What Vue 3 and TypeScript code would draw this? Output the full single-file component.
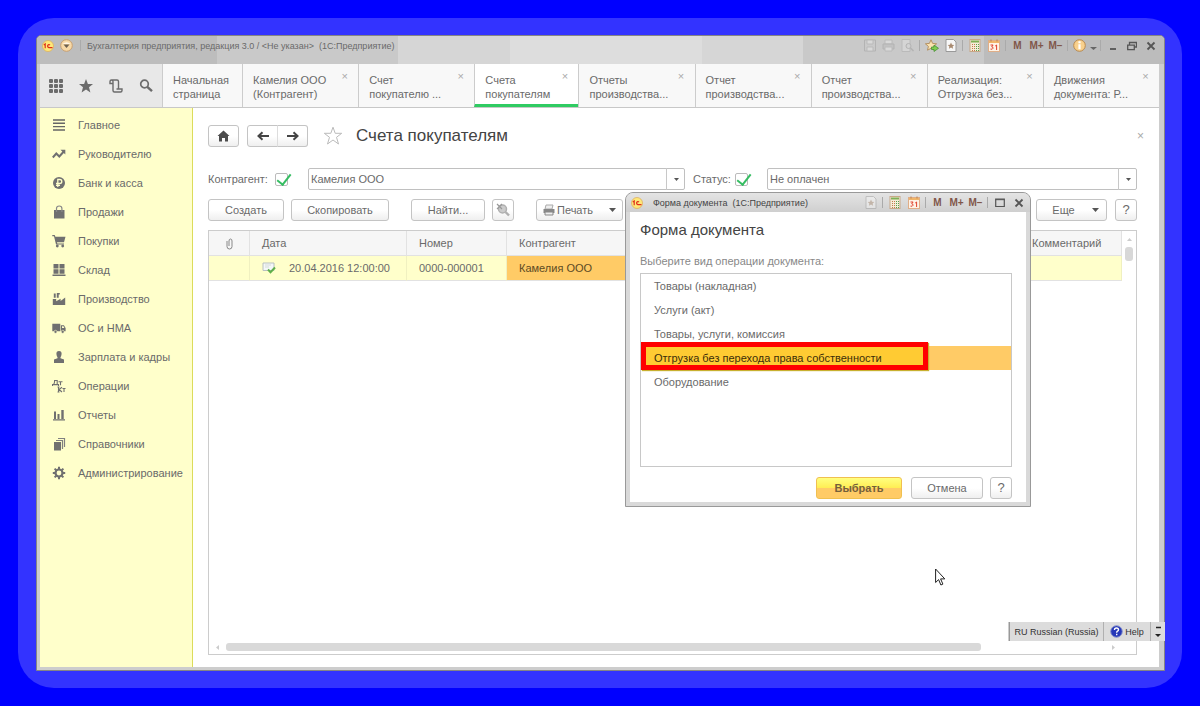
<script setup lang="ts">
import { ref } from 'vue'

interface Tab { lines: [string, string]; kind: 'home' | 'doc' | 'active' }
interface Section { label: string; icon: string }

const tabs: Tab[] = [
  { lines: ['Начальная', 'страница'], kind: 'home' },
  { lines: ['Камелия ООО', '(Контрагент)'], kind: 'doc' },
  { lines: ['Счет', 'покупателю ...'], kind: 'doc' },
  { lines: ['Счета', 'покупателям'], kind: 'active' },
  { lines: ['Отчеты', 'производства...'], kind: 'doc' },
  { lines: ['Отчет', 'производства...'], kind: 'doc' },
  { lines: ['Отчет', 'производства...'], kind: 'doc' },
  { lines: ['Реализация:', 'Отгрузка без...'], kind: 'doc' },
  { lines: ['Движения', 'документа: Р...'], kind: 'doc' },
]

const sections: Section[] = [
  { label: 'Главное', icon: 'menu' },
  { label: 'Руководителю', icon: 'trend' },
  { label: 'Банк и касса', icon: 'ruble' },
  { label: 'Продажи', icon: 'bag' },
  { label: 'Покупки', icon: 'cart' },
  { label: 'Склад', icon: 'store' },
  { label: 'Производство', icon: 'factory' },
  { label: 'ОС и НМА', icon: 'truck' },
  { label: 'Зарплата и кадры', icon: 'person' },
  { label: 'Операции', icon: 'dtkt' },
  { label: 'Отчеты', icon: 'chart' },
  { label: 'Справочники', icon: 'books' },
  { label: 'Администрирование', icon: 'gear' },
]

const operations = [
  'Товары (накладная)',
  'Услуги (акт)',
  'Товары, услуги, комиссия',
  'Отгрузка без перехода права собственности',
  'Оборудование',
]
const selected = ref(3)
const useCustomer = ref(true)
const useStatus = ref(true)
</script>

<template>
  <div class="desk">
    <svg class="defs" aria-hidden="true">
      <symbol id="logo" viewBox="0 0 12 12">
        <circle cx="6" cy="6" r="5.500" fill="#ffe878" stroke="#dcb060" stroke-width=".8" />
        <path d="M1.800 5l1.400-1v4.300M8 4.900a1.500 1.500 0 1 0-1 2.700H10.500" fill="none" stroke="#e0301c" stroke-width="1.200" />
      </symbol>
      <symbol id="calc" viewBox="0 0 12 13">
        <rect x="1" y=".5" width="10" height="12" fill="#f6ecd8" stroke="#c8a888" />
        <path d="M2 2.500h8" stroke="#7fae55" stroke-width="2" />
        <path d="M3.500 5v7M5.500 5v7" stroke="#c7794c" stroke-dasharray="1 1" />
        <path d="M7.500 5v7M9.500 5v7" stroke="#58a24c" stroke-dasharray="1 1" />
      </symbol>
      <symbol id="calendar" viewBox="0 0 12 13">
        <rect x=".5" y="1.500" width="11" height="11" fill="#fff3e6" stroke="#dfae88" />
        <path d="M1 3h10" stroke="#f0b56a" stroke-width="2" />
        <path d="M3 .5v2M9 .5v2" stroke="#b98050" />
        <path d="M2.500 6h2.600l-1.400 1.800q1.600 0 1.300 1.500-.5 1.400-2.500.8M7.200 7l1.400-1v5" fill="none" stroke="#e0402c" />
      </symbol>
      <symbol id="close" viewBox="0 0 10 10"><path d="M1.500 1.500l7 7M8.500 1.500l-7 7" stroke="#555" stroke-width="1.800" /></symbol>
      <symbol id="favdoc" viewBox="0 0 12 13">
        <path d="M1 .5h7.500l2.500 2.500v9.500h-10z" fill="#f7f7f7" stroke="#999" />
        <path d="M6 3.500l1 2.200 2.300.2-1.700 1.500.5 2.400L6 8.600 3.900 9.800l.5-2.400-1.700-1.500 2.300-.2z" fill="#a88a70" />
      </symbol>

      <symbol id="menu" viewBox="0 0 14 14"><path d="M1 2h12M1 5.300h12M1 8.600h12M1 12h12" stroke="#666" stroke-width="1.400" /></symbol>
      <symbol id="trend" viewBox="0 0 14 14"><path d="M.8 10.500l3.500-4 3 3 4.500-5" fill="none" stroke="#707070" stroke-width="2" /><path d="M8.500 2.800H13.300V7.600z" fill="#707070" /></symbol>
      <symbol id="ruble" viewBox="0 0 14 14"><circle cx="7" cy="7" r="6" fill="#707070" /><path d="M5.800 11V3.500h2q2 0 2 2t-2 2H4M4 9.300h4" fill="none" stroke="#ffffcb" stroke-width="1.300" /></symbol>
      <symbol id="bag" viewBox="0 0 14 14"><path d="M2 5h10.500v8.500h-10.500z" fill="#707070" /><path d="M4.500 7V3.500q0-2.500 2.700-2.500t2.700 2.500V7" fill="none" stroke="#888" stroke-width="1.200" /></symbol>
      <symbol id="cart" viewBox="0 0 14 14"><path d="M.3 1h2.400l.7 1.700H13.500L12 8.200H5l.3 1.200H12v1.200H4L2 2.200H.3z" fill="#707070" /><circle cx="5.300" cy="12" r="1.400" fill="#707070" /><circle cx="10.700" cy="12" r="1.400" fill="#707070" /></symbol>
      <symbol id="store" viewBox="0 0 14 14"><path d="M1.500 1h5v4.500h-5zM7.500 1h5v4.500h-5zM1.500 6.300h5v4.500h-5zM7.500 6.300h5v4.500h-5zM.5 11.500h13v1.500H.5z" fill="#707070" /></symbol>
      <symbol id="factory" viewBox="0 0 14 14"><path d="M.8 13V7h3.400v2.300L8.600 6.800v2.200L13.200 5.600V13zM1.800 1.500h1.900v4.300H1.800zM4.800 1h3v1.400H6.700v3.400H4.800z" fill="#707070" /></symbol>
      <symbol id="truck" viewBox="0 0 14 14"><path d="M.3 2.800h8v7.500h-8zM8.900 4.300h3l1.700 2.700v3.300H8.900z" fill="#707070" /><path d="M10 5.300h1.500l.9 1.700H10z" fill="#ffffcb" /><circle cx="3.500" cy="10.800" r="1.500" fill="#707070" stroke="#ffffcb" stroke-width=".6" /><circle cx="10.700" cy="10.800" r="1.500" fill="#707070" stroke="#ffffcb" stroke-width=".6" /></symbol>
      <symbol id="person" viewBox="0 0 14 14"><path d="M7 1q2.800 0 2.600 3Q9.300 6.500 8.500 7.200v1L12 9.500V13H2V9.500l3.500-1.300v-1Q4.700 6.500 4.400 4 4.200 1 7 1z" fill="#707070" /></symbol>
      <symbol id="dtkt" viewBox="0 0 14 14"><path d="M.5 7V5.600h6V7M1.500 5.600Q2.700 4 2.600 1.500h2.600v4M6.500 2.700h4M8.500 2.700v3.500M5.500 8h2M6.500 8v5M5.500 13h2M10 8.300L7 10.500l3 2.500M10.500 9.500h3M12 9.500V13" fill="none" stroke="#707070" stroke-width="1.100" /></symbol>
      <symbol id="chart" viewBox="0 0 14 14"><path d="M2 3.500h2V11H2zM5.500 6h2v5h-2zM9.300 2h2.400v9H9.300zM1 11.200h12v1.300H1z" fill="#707070" /></symbol>
      <symbol id="books" viewBox="0 0 14 14"><path d="M2 5h7v8.500H2z" fill="#707070" /><path d="M4 3.500h6.500V12M6 1.500h6.500V10" fill="none" stroke="#808080" stroke-width="1.200" /></symbol>
      <symbol id="gear" viewBox="0 0 14 14"><circle cx="7" cy="7" r="3.500" fill="none" stroke="#707070" stroke-width="2.200" /><path d="M7 .8v2.400M7 10.800v2.400M.8 7h2.400M10.800 7h2.400M2.600 2.600l1.700 1.700M9.700 9.700l1.700 1.700M11.400 2.600L9.700 4.300M4.300 9.700l-1.700 1.700" stroke="#707070" stroke-width="2" /></symbol>
    </svg>

    <div class="halo">
      <div class="window">
        <header class="titlebar">
          <svg class="logo"><use href="#logo" /></svg>
          <button class="chip orb" aria-label="Главное меню">
            <svg width="13" height="13" viewBox="0 0 13 13"><circle cx="6.500" cy="6.500" r="5.800" fill="#f8d9a6" stroke="#c9a070" /><path d="M2.500 5q4-3.500 8 0z" fill="#fff6e6" /><path d="M3.500 5.500h6L6.500 9z" fill="#6d6050" /></svg>
          </button>
          <i class="sep"></i>
          <span class="caption">Бухгалтерия предприятия, редакция 3.0 / &lt;Не указан&gt;&nbsp; (1С:Предприятие)</span>
          <div class="tools">
            <button class="chip faded" aria-label="Сохранить"><svg width="12" height="13" viewBox="0 0 12 13"><path d="M.5 1h11v11H.5z" fill="#ccc" stroke="#999" /><path d="M3 1h6v4H3zM3 8h6v4H3z" fill="#eee" stroke="#aaa" /></svg></button>
            <button class="chip faded" aria-label="Печать"><svg width="13" height="13" viewBox="0 0 13 13"><path d="M3 1h7v4H3z" fill="#eee" stroke="#aaa" /><path d="M1 5h11v5H1z" fill="#bbb" stroke="#999" /><path d="M3 8h7v4H3z" fill="#eee" stroke="#aaa" /></svg></button>
            <button class="chip faded" aria-label="Просмотр"><svg width="13" height="13" viewBox="0 0 13 13"><path d="M1 .5h8v12H1z" fill="#e4e4e4" stroke="#aaa" /><circle cx="7.500" cy="7" r="2.500" fill="#ddd" stroke="#999" /><path d="M9.500 9l3 3" stroke="#999" stroke-width="1.500" /></svg></button>
            <i class="sep"></i>
            <button class="chip" aria-label="В избранное"><svg width="14" height="13" viewBox="0 0 14 13"><path d="M6 .8l1.600 3.600 4 .4-3 2.600.9 3.800L6 9.300l-3.500 1.900.9-3.800-3-2.600 4-.4z" fill="#fbe3b0" stroke="#b08a58" stroke-width=".9" /><path d="M6.500 8H9V6l4.500 3.300L9 12.500v-2H6.500z" fill="#7fce50" stroke="#4a9238" stroke-width=".8" /></svg></button>
            <button class="chip" aria-label="Избранное"><svg width="12" height="13"><use href="#favdoc" /></svg></button>
            <i class="sep"></i>
            <button class="chip" aria-label="Калькулятор"><svg width="12" height="13"><use href="#calc" /></svg></button>
            <button class="chip" aria-label="Календарь"><svg width="12" height="13"><use href="#calendar" /></svg></button>
            <i class="sep"></i>
            <button class="chip mem">M</button>
            <button class="chip mem">M+</button>
            <button class="chip mem">M−</button>
            <i class="sep"></i>
            <button class="chip" aria-label="Справка"><svg width="13" height="13" viewBox="0 0 13 13"><circle cx="6.500" cy="6.500" r="5.800" fill="#f8d08c" stroke="#b98a50" /><path d="M6.500 2.200v2M6.500 5.200v5" stroke="#fff" stroke-width="2.200" /></svg></button>
            <button class="chip slim" aria-label="Ещё"><svg width="7" height="13" viewBox="0 0 7 13"><path d="M0 8h7L3.500 11z" fill="#666" /></svg></button>
            <i class="sep"></i>
            <button class="chip" aria-label="Свернуть"><svg width="10" height="10" viewBox="0 0 10 10"><path d="M2 8h6" stroke="#555" stroke-width="1.800" /></svg></button>
            <button class="chip" aria-label="Восстановить"><svg width="10" height="10" viewBox="0 0 10 10"><path d="M2.500 3.500v-2h7v4.500h-2M.7 4.200h6.600v4.500H.7z" fill="none" stroke="#555" stroke-width="1.300" /></svg></button>
            <button class="chip" aria-label="Закрыть"><svg width="10" height="10"><use href="#close" /></svg></button>
          </div>
        </header>

        <nav class="tabs">
          <div class="launch">
            <button aria-label="Разделы"><svg width="16" height="16" viewBox="0 0 16 16"><g fill="#6b6b6b"><template v-for="r in 3" :key="r"><rect v-for="c in 3" :key="c" :x="c * 5 - 4" :y="r * 5 - 4" width="4" height="4" rx="1" /></template></g></svg></button>
            <button aria-label="Избранное"><svg width="16" height="16" viewBox="0 0 16 16"><path d="M8 1l1.900 5H15l-4 3.300 1.400 5.200L8 11.500l-4.400 3L5 9.300 1 6h5.100z" fill="#6b6b6b" /></svg></button>
            <button aria-label="История"><svg width="16" height="16" viewBox="0 0 16 16"><path d="M4.500 5.500H2V3.500Q2 2 3.500 2H9Q10.500 2 10.500 3.500V11H14v1.500q0 1.500-1.500 1.500H6.500Q5 14 5 12.500V3.500Q5 2 3.500 2M10.500 11H8.500" fill="none" stroke="#6b6b6b" stroke-width="1.400" /></svg></button>
            <button aria-label="Поиск"><svg width="16" height="16" viewBox="0 0 16 16"><circle cx="6.500" cy="6" r="3.800" fill="none" stroke="#6b6b6b" stroke-width="1.700" /><path d="M9.300 8.800l4.700 4.400" stroke="#6b6b6b" stroke-width="2.400" /></svg></button>
          </div>
          <div v-for="(t, i) in tabs" :key="i" class="tab" :class="t.kind">
            <a href="#">{{ t.lines[0] }}<br />{{ t.lines[1] }}</a>
            <button v-if="t.kind !== 'home'" class="x" aria-label="Закрыть вкладку">×</button>
          </div>
        </nav>

        <div class="body">
          <aside class="side">
            <a v-for="s in sections" :key="s.label" href="#">
              <svg width="14" height="14"><use :href="'#' + s.icon" /></svg>{{ s.label }}
            </a>
          </aside>

          <main class="main">
            <div class="heading">
              <button class="btn home" aria-label="Начальная страница"><svg width="13" height="12" viewBox="0 0 13 12"><path d="M6.500.5L12.500 6H11v5.500H8V8H5v3.500H2V6H.5z" fill="#4c4c4c" /></svg></button>
              <div class="pair">
                <button class="btn" aria-label="Назад"><svg width="12" height="10" viewBox="0 0 12 10"><path d="M12 5H2M5.500 1.300L1.500 5l4 3.700" fill="none" stroke="#444" stroke-width="2" /></svg></button>
                <button class="btn" aria-label="Вперед"><svg width="12" height="10" viewBox="0 0 12 10"><path d="M0 5h10M6.500 1.300L10.500 5l-4 3.700" fill="none" stroke="#444" stroke-width="2" /></svg></button>
              </div>
              <button class="star" aria-label="Добавить в избранное"><svg width="20" height="20" viewBox="0 0 20 20"><path d="M10 1.200l2.200 6.100h6.500l-5.200 4 2 6.700L10 14l-5.500 4 2-6.700-5.200-4h6.500z" fill="#fff" stroke="#bbb" /></svg></button>
              <h1>Счета покупателям</h1>
              <button class="x" aria-label="Закрыть">×</button>
            </div>

            <div class="filters">
              <label class="flag"><span class="first">Контрагент:</span><input v-model="useCustomer" type="checkbox" /></label>
              <span class="combo one">
                <select aria-label="Контрагент"><option>Камелия ООО</option></select>
                <i class="drop"><svg width="5" height="3" viewBox="0 0 5 3"><path d="M0 0h5L2.500 3z" fill="#555" /></svg></i>
              </span>
              <label class="flag"><span>Статус:</span><input v-model="useStatus" type="checkbox" /></label>
              <span class="combo two">
                <select aria-label="Статус"><option>Не оплачен</option></select>
                <i class="drop"><svg width="5" height="3" viewBox="0 0 5 3"><path d="M0 0h5L2.500 3z" fill="#555" /></svg></i>
              </span>
            </div>

            <div class="toolbar">
              <button class="btn create">Создать</button>
              <button class="btn copy">Скопировать</button>
              <button class="btn find">Найти...</button>
              <button class="btn square" aria-label="Отменить поиск"><svg width="16" height="16" viewBox="0 0 16 16"><circle cx="7.500" cy="7" r="4" fill="#ccc" stroke="#b0b0b0" stroke-width="1.500" /><path d="M10.500 10l3.500 3.500" stroke="#b0b0b0" stroke-width="2.400" /><path d="M2 2l5 5M7 2L2 7" stroke="#999" stroke-width="1.200" /></svg></button>
              <button class="btn print"><svg width="12" height="12" viewBox="0 0 12 12"><path d="M3 1h7L9 5H2z" fill="#eee" stroke="#aaa" /><path d="M.5 5h11v4H.5z" fill="#888" /><path d="M2 8h8v3H2z" fill="#eee" stroke="#888" /></svg>Печать<svg class="caret" width="7" height="4" viewBox="0 0 7 4"><path d="M0 0h7L3.500 4z" fill="#555" /></svg></button>
              <button class="btn more">Еще<svg width="7" height="4" viewBox="0 0 7 4"><path d="M0 0h7L3.500 4z" fill="#555" /></svg></button>
              <button class="btn square q">?</button>
            </div>

            <div class="grid">
              <div class="rows">
                <table>
                  <colgroup><col class="c1" /><col class="c2" /><col class="c3" /><col /><col class="c5" /></colgroup>
                  <thead>
                    <tr>
                      <th class="clip"><svg width="7" height="12" viewBox="0 0 7 12"><path d="M1 3v5.500Q1 11 3.500 11T6 8.500V3Q6 1 4.500 1T3 3v5" fill="none" stroke="#888" /></svg></th>
                      <th>Дата</th><th>Номер</th><th>Контрагент</th><th>Комментарий</th>
                    </tr>
                  </thead>
                  <tbody>
                    <tr>
                      <td></td>
                      <td><div class="date"><svg width="14" height="12" viewBox="0 0 14 12"><path d="M1 1h11v7.500H1z" fill="#f4f8f8" stroke="#b8c0c0" /><path d="M3 3h6M3 5h4" stroke="#d5dada" /><path d="M6 7.500l2.500 2.700L13 5.500" fill="none" stroke="#5faf4b" stroke-width="2" /></svg>20.04.2016 12:00:00</div></td>
                      <td>0000-000001</td>
                      <td class="current">Камелия ООО</td>
                      <td></td>
                    </tr>
                  </tbody>
                </table>
                <div class="vbar"><svg width="5" height="3" viewBox="0 0 5 3"><path d="M0 3h5L2.500 0z" fill="#ccc" /></svg><i></i></div>
              </div>
              <div class="hbar"><svg width="3" height="5" viewBox="0 0 3 5"><path d="M3 0v5L0 2.500z" fill="#ccc" /></svg><i></i><svg width="3" height="5" viewBox="0 0 3 5"><path d="M0 0v5l3-2.500z" fill="#ccc" /></svg></div>
            </div>
          </main>
        </div>

        <section class="dialog" role="dialog" aria-labelledby="dlg-title">
          <header class="dlg-bar">
            <svg class="logo"><use href="#logo" /></svg>
            <span class="caption dark">Форма документа&nbsp; (1С:Предприятие)</span>
            <div class="tools">
              <button class="chip faded" aria-label="Избранное"><svg width="12" height="13"><use href="#favdoc" /></svg></button>
              <i class="sep"></i>
              <button class="chip" aria-label="Калькулятор"><svg width="12" height="13"><use href="#calc" /></svg></button>
              <button class="chip" aria-label="Календарь"><svg width="12" height="13"><use href="#calendar" /></svg></button>
              <i class="sep"></i>
              <button class="chip mem">M</button>
              <button class="chip mem">M+</button>
              <button class="chip mem">M−</button>
              <i class="sep"></i>
              <button class="chip" aria-label="Развернуть"><svg width="10" height="10" viewBox="0 0 10 10"><path d="M.7 1.200h8.600v7.300H.7z" fill="none" stroke="#555" stroke-width="1.200" /><path d="M.5 1.700h9" stroke="#555" /></svg></button>
              <button class="chip" aria-label="Закрыть"><svg width="10" height="10"><use href="#close" /></svg></button>
            </div>
          </header>
          <div class="dlg-body">
            <h2 id="dlg-title">Форма документа</h2>
            <p id="dlg-hint">Выберите вид операции документа:</p>
            <ul role="listbox" aria-labelledby="dlg-hint">
              <li v-for="(o, i) in operations" :key="o" role="option" :aria-selected="i === selected" :class="{ picked: i === selected }" tabindex="0" @click="selected = i">
                <span v-if="i === selected" class="frame"></span><span class="name">{{ o }}</span>
              </li>
            </ul>
            <div class="actions">
              <button class="btn choose">Выбрать</button>
              <button class="btn cancel">Отмена</button>
              <button class="btn square q">?</button>
            </div>
          </div>
        </section>

        <div class="langbar">
          <button class="lang">RU Russian (Russia)</button>
          <button class="help"><svg width="13" height="13" viewBox="0 0 13 13"><circle cx="6.500" cy="6.500" r="5.800" fill="#2638b8" stroke="#8a94cc" /><path d="M4.500 5q0-2 2-2t2 1.800q0 .9-1 1.400-.8.400-.8 1.500M6.700 8.800v1.500" fill="none" stroke="#fff" stroke-width="1.400" /></svg>Help</button>
          <button class="opts" aria-label="Параметры"><svg width="6" height="12" viewBox="0 0 6 12"><path d="M1 1.500h5" stroke="#222" stroke-width="1.500" /><path d="M0 8h6L3 11z" fill="#222" /></svg></button>
        </div>

        <svg class="pointer" width="11" height="18" viewBox="0 0 11 18"><path d="M.6 1v13.500l3-2.900 2.300 5.400 2-.9-2.300-5.200h4.200z" fill="#fff" stroke="#222" /></svg>
      </div>
    </div>
  </div>
</template>

<style>
body { margin: 0; background: #0000ff; }
</style>

<style scoped>
* { box-sizing: border-box; }
.desk {
  min-height: 100vh;
  padding: 18px;
  background: #0000ff;
  display: flex;
  font: 11px/14px "Liberation Sans", Arial, sans-serif;
  color: #6a6a6a;
}
.defs { position: absolute; width: 0; height: 0; }
button, select, input { font: inherit; color: inherit; margin: 0; }
button { padding: 0; border: 0; background: none; }
a { color: inherit; text-decoration: none; }
.halo { flex: 1; display: flex; background: #3333ff; border-radius: 36px; padding: 17px 17px 17px 18px; }
.window {
  position: relative;
  flex: 1;
  min-width: 0;
  display: flex;
  flex-direction: column;
  padding: 0 5px 3px 3px;
  background: #cdcdcd;
  border: 1px solid #858585;
  border-radius: 5px 5px 0 0;
}

.titlebar {
  height: 28px;
  margin: 0 -5px 0 -3px;
  padding: 0 4px 9px 5px;
  display: flex;
  align-items: center;
  border-radius: 4px 4px 0 0;
  background: linear-gradient(90deg, #bdbdbd 16%, #c9c9c9 16% 32%, #d6d6d6 32% 42%, #dddddd 42% 59%, #d6d6d6 59% 68%, #c9c9c9 68% 84%, #bcbcbc 84%);
}
.logo { width: 12px; height: 12px; flex: none; }
.orb { margin: 0 2px 0 3px; }
.caption { margin-left: 4px; font-size: 9px; color: #6a6a6a; white-space: nowrap; }
.tools { margin-left: auto; display: flex; align-items: center; }
.chip { width: 19px; height: 18px; display: flex; align-items: center; justify-content: center; flex: none; }
.chip.slim { width: 9px; }
.chip.faded { opacity: .45; }
.chip.mem { color: #80564a; font-size: 10px; font-weight: bold; }
.sep { width: 1px; height: 11px; margin: 0 2px; background: #aaa; }

.tabs { display: flex; height: 44px; flex: none; background: #f8f8f8; border-bottom: 1px solid #c8c8c8; }
.launch { width: 122px; padding: 0 1px; flex: none; display: flex; background: #e8e8e8; }
.launch button { flex: 1; display: flex; align-items: center; justify-content: center; }
.tab { flex: 1 1 116px; min-width: 0; display: flex; justify-content: space-between; align-items: flex-start; padding: 9px 10px 0 10px; border-left: 1px solid #ccc; white-space: nowrap; overflow: hidden; }
.tab.home { flex-basis: 80px; }
.tab.active { flex-basis: 104px; background: #fff; border-bottom: 3px solid #2fcb62; }
.x { color: #aaa; font-size: 12px; line-height: 8px; }
.tab .x { margin-top: -1px; font-size: 11px; width: 7px; margin-left: -7px; }

.body { flex: 1; display: flex; background: #fff; }
.side { width: 153px; flex: none; padding-top: 2px; background: #ffffcb; border-right: 1px solid #dcdc5a; }
.side a { height: 29px; display: flex; align-items: center; gap: 12px; padding-left: 12px; }
.main { flex: 1; min-width: 0; display: flex; flex-direction: column; padding: 16px 22px 12px 15px; }

.btn {
  height: 22px;
  display: flex;
  align-items: center;
  justify-content: center;
  border: 1px solid #c4c4c4;
  border-radius: 3px;
  background: linear-gradient(#fff 50%, #efefef);
  flex: none;
}
.square { width: 22px; }
.q { font-size: 13px; }
.heading { display: flex; align-items: center; height: 24px; }
.home { width: 31px; }
.pair { display: flex; margin-left: 8px; }
.pair .btn { width: 31px; border-radius: 3px 0 0 3px; }
.pair .btn + .btn { border-left-color: #ddd; margin-left: -1px; border-radius: 0 3px 3px 0; }
.star { display: flex; margin-left: 15px; }
h1 { margin: 0 auto 0 13px; font-size: 17px; line-height: 20px; font-weight: normal; color: #444; }
.heading .x { margin-right: -7px; }

.filters { display: flex; align-items: center; height: 22px; margin-top: 20px; }
.flag { display: flex; align-items: center; }
.flag .first { width: 67px; }
.flag span { width: 42px; white-space: nowrap; }
.flag input {
  appearance: none;
  width: 13px;
  height: 13px;
  border: 1px solid #bbb;
  border-radius: 2px;
  background: #fff;
  display: grid;
}
.flag input:checked::before {
  content: "";
  width: 6px;
  height: 12px;
  margin: -3px 0 0 4px;
  border: solid #35bd62;
  border-width: 0 2px 2px 0;
  transform: rotate(38deg);
}
.combo { display: grid; height: 22px; min-width: 0; }
.combo.one { flex: 377 1 0; margin: 0 8px 0 20px; }
.combo.two { flex: 370 1 0; margin-left: 19px; }
.combo select { grid-area: 1 / 1; appearance: none; width: 100%; padding: 0 20px 0 2px; border: 1px solid #c0c0c0; border-radius: 2px; background: #fff; }
.drop { grid-area: 1 / 1; justify-self: end; width: 19px; border-left: 1px solid #c8c8c8; display: flex; align-items: center; justify-content: center; pointer-events: none; }

.toolbar { display: flex; margin-top: 9px; }
.create { width: 76px; }
.copy { width: 98px; margin-left: 7px; }
.find { width: 74px; margin: 0 7px 0 22px; }
.print { width: 87px; margin-left: 22px; gap: 2px; }
.caret { margin-left: 14px; }
.more { width: 71px; gap: 17px; padding-left: 8px; margin: 0 8px 0 auto; }

.grid { flex: 1; display: flex; flex-direction: column; margin-top: 9px; border: 1px solid #ccc; }
.rows { flex: 1; display: flex; }
table { flex: 1; align-self: flex-start; min-width: 0; table-layout: fixed; border-collapse: separate; border-spacing: 0; }
.c1 { width: 41px; }
.c2 { width: 157px; }
.c3 { width: 100px; }
.c5 { width: 102px; }
th, td { height: 25px; padding: 0 0 0 12px; text-align: left; font-weight: normal; white-space: nowrap; border-right: 1px solid #e2e2e2; border-bottom: 1px solid #e2e2e2; }
th { background: #f6f6f6; }
.clip { padding: 0; text-align: center; }
.clip svg { display: inline-block; vertical-align: middle; }
td { background: #ffffcb; border-right-color: #f0f0c0; }
td.current { background: #ffcb66; color: #5c4a24; }
.date { display: flex; align-items: center; gap: 13px; }
.vbar { width: 14px; display: flex; flex-direction: column; align-items: center; padding-top: 7px; gap: 6px; }
.vbar i { width: 8px; height: 14px; border-radius: 3px; background: #d8d8d8; }
.hbar { height: 14px; display: flex; align-items: center; padding: 0 21px 0 7px; gap: 7px; }
.hbar i { width: 84%; height: 8px; margin-right: auto; border-radius: 3px; background: #d9d9d9; }

.dialog {
  position: absolute;
  top: 156px;
  right: 133px;
  width: 406px;
  padding: 0 4px 4px;
  border: 1px solid #999;
  border-radius: 8px 8px 0 0;
  background: #d9d9d9;
}
.dlg-bar { display: flex; align-items: center; height: 19px; margin: 0 -4px; padding: 0 2px 0 5px; border-radius: 7px 7px 0 0; background: linear-gradient(#e4e4e4, #cfcfcf); }
.caption.dark { color: #444; margin-left: 10px; }
.dlg-body { background: #fff; padding: 8px 14px 3px 10px; }
h2 { margin: 0; font-size: 15px; line-height: 20px; font-weight: normal; color: #444; }
p { margin: 14px 0 5px; color: #888; }
ul { list-style: none; margin: 0; padding: 0; height: 194px; border: 1px solid #c8c8c8; }
li { position: relative; height: 24px; padding-left: 13px; display: flex; align-items: center; }
li.picked { background: #ffcb66; color: #3c2e08; }
.frame { position: absolute; top: -4px; left: 0; width: 287px; height: 28px; border: 5px solid #f00; background: #ffcb33; box-shadow: 1px 1px 1px #c8b030; }
.name { position: relative; }
.actions { display: flex; justify-content: flex-end; margin-top: 10px; }
.choose { width: 86px; border-color: #f0c050; background: linear-gradient(#ffff80, #ffee55 48%, #ffcb66 52%); font-weight: bold; color: #75603a; }
.cancel { width: 72px; margin: 0 7px 0 9px; }

.langbar { position: absolute; right: -1px; bottom: 29px; display: flex; height: 19px; background: #dcdcdc; border-left: 1px solid #ccc; color: #333; font-size: 9px; white-space: nowrap; }
.lang { width: 94px; border-left: 1px solid #999; }
.help { width: 47px; border-left: 1px solid #b0b0b0; display: flex; align-items: center; justify-content: center; gap: 2px; }
.opts { width: 15px; border-left: 1px solid #b0b0b0; display: flex; align-items: center; justify-content: center; }
.pointer { position: absolute; top: 532px; right: 218px; }
</style>
